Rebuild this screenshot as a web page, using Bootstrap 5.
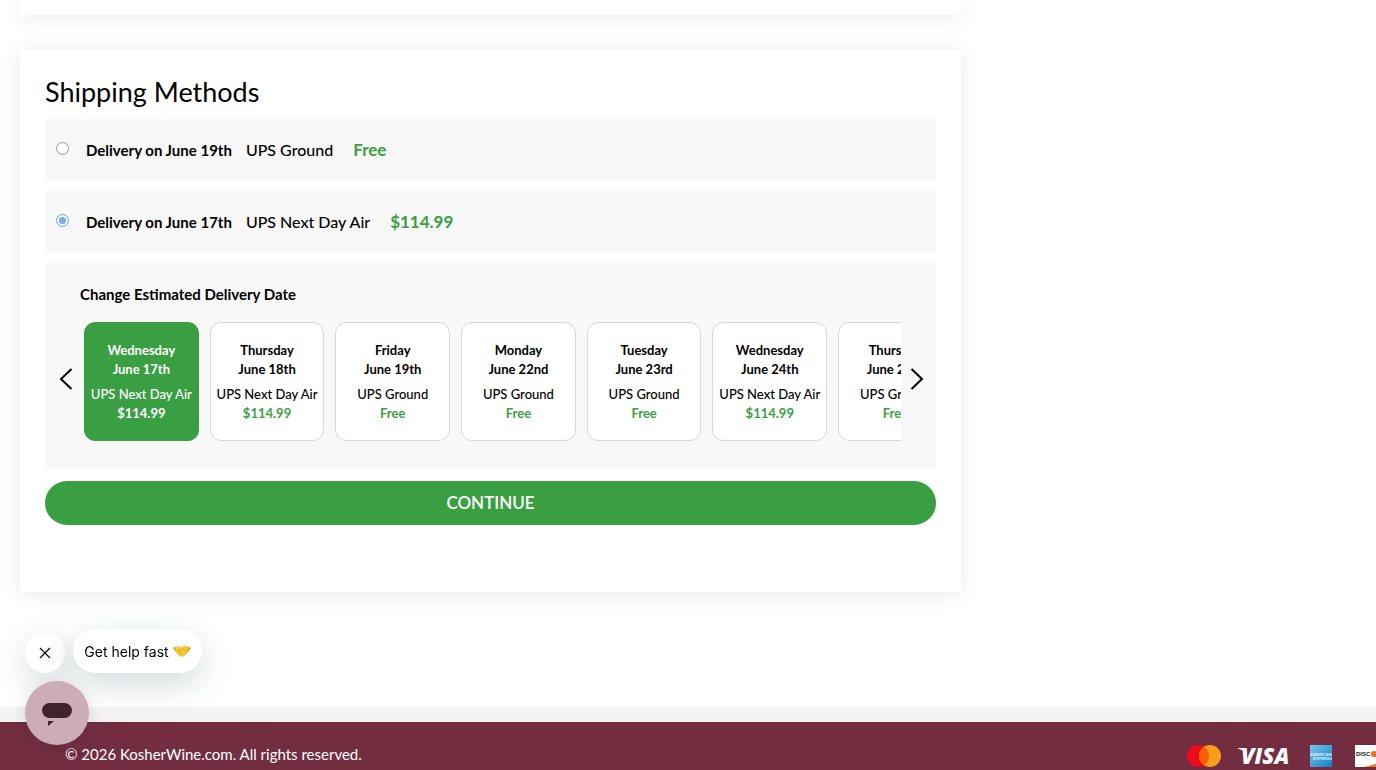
<!DOCTYPE html>
<html lang="en">
<head>
<meta charset="utf-8">
<meta name="viewport" content="width=device-width, initial-scale=1">
<title>Checkout - KosherWine.com</title>
<link rel="stylesheet" href="https://cdn.jsdelivr.net/npm/bootstrap@5.3.0/dist/css/bootstrap.min.css">
<style>
:root { --kw-green: #3a9f43; --kw-wine: #722d41; }
body { font-family: Lato, "Liberation Sans", sans-serif; color: #000; background: #fff; overflow: hidden; }
.checkout { display: grid; grid-template-columns: minmax(0, 1fr) 360px; column-gap: 35px; padding: 0 20px; }
.panel { background: #fff; padding: 25px; box-shadow: 0 2px 20px rgba(0,0,0,.09); }
.panel-prev { height: 15px; padding: 0; margin-bottom: 35px; }
.panel-ship { padding-bottom: 67px; margin-bottom: 115px; }
.panel h1 { font-size: 27px; line-height: 34px; font-weight: 400; margin: 0 0 10px; }
.method { background: #f8f8f8; height: 62px; padding: 0 11px; margin-bottom: 10px; }
.method .form-check-input { width: 13px; height: 13px; margin: 0 17px 4px 0; border-color: #9a9a9a; background-color: #fff; box-shadow: none; flex: none; }
.method .form-check-input:checked { border-color: #7fb0ee; background-image: none; background-color: #7aaeed; box-shadow: inset 0 0 0 2px #fff; }
.method label { font-size: 16px; line-height: 20px; }
.method .when { font-size: 15px; font-weight: 700; margin-right: 14px; }
.method .how { font-weight: 500; margin-right: 20px; }
.method .cost { font-size: 17px; font-weight: 700; color: var(--kw-green); }
.dates { background: #f8f8f8; padding: 21px 35px 28px; margin-bottom: 12px; position: relative; }
.dates h2 { font-size: 15px; line-height: 20px; font-weight: 700; margin: 0 0 18px; }
.slides { display: flex; overflow: hidden; margin-left: 4px; }
.slide { flex: 0 0 calc(100% / 6.5); padding-right: 11px; }
.slide button { width: 100%; height: 119px; border: 1px solid #d8d8d8; border-radius: 11px; background: #fff; color: #000; padding: 0; font-size: 13px; line-height: 19px; text-align: center; white-space: nowrap; }
.slide b, .slide span { display: block; }
.slide .how { margin-top: 6px; font-weight: 500; }
.slide .cost { color: var(--kw-green); }
.slide .chosen { background: var(--kw-green); border-color: var(--kw-green); color: #fff; }
.slide .chosen .cost { color: #fff; }
.arrow { position: absolute; top: 104px; border: 0; background: none; padding: 0; line-height: 0; }
.arrow-prev { left: 14px; }
.arrow-next { right: 12px; }
.go { height: 44px; border-radius: 22px; border: 0; background: var(--kw-green); color: #fff; font-size: 17px; font-weight: 600; }
.strip { height: 15px; background: #f4f2f3; }
.foot { background: var(--kw-wine); color: #fff; height: 64px; padding-left: 65px; }
.foot p { font-size: 15px; line-height: 20px; margin: 0; }
.pay { width: 189px; overflow: hidden; padding-top: 4px; }
.pay svg { flex: none; display: block; }
.chat { position: fixed; left: 25px; bottom: 25px; font-family: Inter, "Liberation Sans", sans-serif; }
.chat button { border: 0; color: #000; display: flex; align-items: center; justify-content: center; }
.chat-x, .chat-msg { background: #fff; box-shadow: 0 10px 32px rgba(20,60,75,.2); }
.chat-x { width: 40px; height: 40px; border-radius: 50%; padding: 0; }
.chat-msg { width: 129px; height: 44px; border-radius: 22px; padding: 0; font-size: 14px; gap: 4px; white-space: nowrap; }
.chat-open { width: 64px; height: 64px; border-radius: 50%; background: #ccadb7; padding: 0; margin-top: 8px; box-shadow: 0 2px 16px rgba(20,50,65,.15); position: relative; }
</style>
</head>
<body>
<main class="checkout">
  <div>
    <section class="panel panel-prev"></section>
    <section class="panel panel-ship">
      <h1>Shipping Methods</h1>
      <div class="method d-flex align-items-center">
        <input class="form-check-input" type="radio" name="method" id="ground">
        <label for="ground" class="d-flex align-items-center"><span class="when">Delivery on June 19th</span><span class="how">UPS Ground</span><span class="cost">Free</span></label>
      </div>
      <div class="method d-flex align-items-center">
        <input class="form-check-input" type="radio" name="method" id="air" checked>
        <label for="air" class="d-flex align-items-center"><span class="when">Delivery on June 17th</span><span class="how">UPS Next Day Air</span><span class="cost">$114.99</span></label>
      </div>
      <div class="dates">
        <h2>Change Estimated Delivery Date</h2>
        <div class="slides">
          <div class="slide"><button type="button" class="chosen"><b>Wednesday</b><b>June 17th</b><span class="how">UPS Next Day Air</span><b class="cost">$114.99</b></button></div>
          <div class="slide"><button type="button"><b>Thursday</b><b>June 18th</b><span class="how">UPS Next Day Air</span><b class="cost">$114.99</b></button></div>
          <div class="slide"><button type="button"><b>Friday</b><b>June 19th</b><span class="how">UPS Ground</span><b class="cost">Free</b></button></div>
          <div class="slide"><button type="button"><b>Monday</b><b>June 22nd</b><span class="how">UPS Ground</span><b class="cost">Free</b></button></div>
          <div class="slide"><button type="button"><b>Tuesday</b><b>June 23rd</b><span class="how">UPS Ground</span><b class="cost">Free</b></button></div>
          <div class="slide"><button type="button"><b>Wednesday</b><b>June 24th</b><span class="how">UPS Next Day Air</span><b class="cost">$114.99</b></button></div>
          <div class="slide"><button type="button"><b>Thursday</b><b>June 25th</b><span class="how">UPS Ground</span><b class="cost">Free</b></button></div>
        </div>
        <button type="button" class="arrow arrow-prev" aria-label="Previous dates"><svg width="14" height="24" viewBox="0 0 14 24" fill="none" stroke="#000" stroke-width="2"><path d="M12.500 2L2 12l10.500 10"/></svg></button>
        <button type="button" class="arrow arrow-next" aria-label="Next dates"><svg width="14" height="24" viewBox="0 0 14 24" fill="none" stroke="#000" stroke-width="2"><path d="M1.500 2L12 12 1.500 22"/></svg></button>
      </div>
      <button type="submit" class="go w-100">CONTINUE</button>
    </section>
  </div>
</main>
<div class="strip"></div>
<footer class="foot d-flex justify-content-between align-items-center">
  <p>© 2026 KosherWine.com. All rights reserved.</p>
  <div class="pay d-flex align-items-center">
    <svg class="me-3" width="34" height="22" viewBox="0 0 34 22" role="img" aria-label="Mastercard"><circle cx="11" cy="11" r="11" fill="#eb0a1e"/><circle cx="23" cy="11" r="11" fill="#f79e1b"/><path d="M17 1.800a11 11 0 0 1 0 18.400a11 11 0 0 1 0-18.400z" fill="#ff5f00"/></svg>
    <svg width="52" height="18" viewBox="0 0 52 18" role="img" aria-label="Visa"><path d="M0 1h8l1 4z" fill="#fff"/><text x="4" y="17" font-family="Open Sans, sans-serif" font-size="22" font-weight="800" font-style="italic" fill="#fff">VISA</text></svg>
    <svg class="ms-3" width="32" height="22" viewBox="-5 0 32 22" role="img" aria-label="American Express"><defs><linearGradient id="ax" x2="1" y2="1"><stop stop-color="#79c6ea"/><stop offset="1" stop-color="#167fc4"/></linearGradient></defs><path d="M0 0h22v22H0z" fill="url(#ax)"/><g fill="#d6f0fb" font-family="Liberation Sans, sans-serif" font-weight="700" font-size="4"><text x="0" y="11">AMERICAN</text><text x="3" y="15">EXPRESS</text></g></svg>
    <svg class="ms-3" width="32" height="22" viewBox="-2 0 32 22" role="img" aria-label="Discover"><path d="M0 0h30v22H0z" fill="#fff"/><text x="1" y="11" font-family="Liberation Sans, sans-serif" font-size="6" font-weight="700" fill="#222">DISC</text><circle cx="19" cy="9" r="3" fill="#f26b21"/><path d="M8 22q9-1 22-7v7z" fill="#f47b20"/></svg>
  </div>
</footer>
<aside class="chat">
  <div class="d-flex gap-2 align-items-end">
    <button type="button" class="chat-x" aria-label="Close"><svg width="12" height="12" viewBox="0 0 12 12" stroke="#000" stroke-width="1.200"><path d="M1 1l10 10M11 1L1 11"/></svg></button>
    <button type="button" class="chat-msg">Get help fast
      <svg width="18" height="12" viewBox="0 0 18 12" aria-hidden="true"><path d="M0 3q4-3 8-1 5-3 10 1l-3 4q-2 4-7 5-3-1-5-5z" fill="#f7c93a"/><path d="M5 5q4 1 5-1l4 3M5 8l2-1M7 10l2-2" fill="none" stroke="#d79a1c" stroke-width=".8"/><path d="M0 3l2-1 2 5-1 0zM16 2l2 1-3 4-1-2z" fill="#e6a520"/></svg>
    </button>
  </div>
  <button type="button" class="chat-open" aria-label="Open chat"><svg width="32" height="26" viewBox="0 0 32 26" fill="#3f242e"><rect x="1" y="3" width="30" height="15" rx="7.500"/><path d="M7 21h6l-6 5z"/></svg></button>
</aside>
<script src="https://cdn.jsdelivr.net/npm/bootstrap@5.3.0/dist/js/bootstrap.bundle.min.js"></script>
</body>
</html>
